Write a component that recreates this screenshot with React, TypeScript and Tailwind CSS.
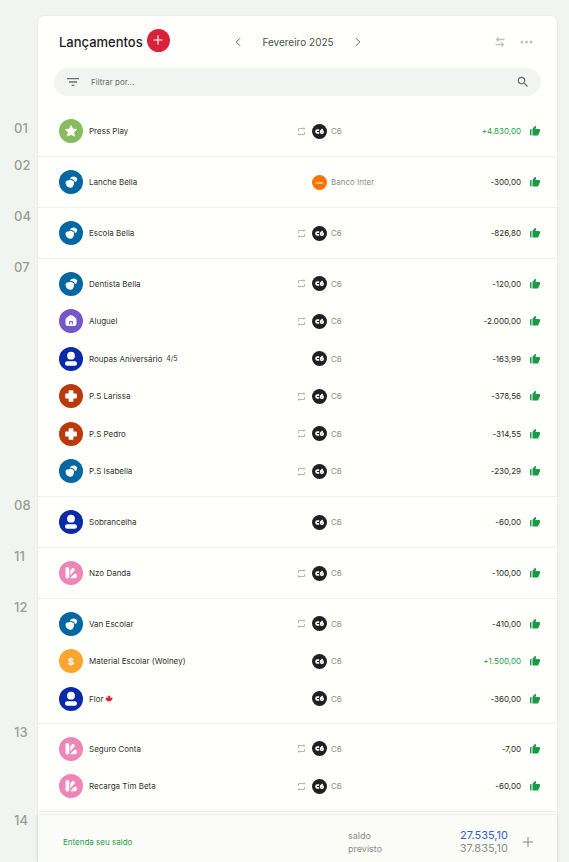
import React from "react";
import { MdFilterList, MdSearch } from "react-icons/md";
import { BiSolidLike } from "react-icons/bi";
import { FaCanadianMapleLeaf } from "react-icons/fa";
import { ChevronLeft, ChevronRight, Plus } from "lucide-react";

type Kind = "star" | "kids" | "home" | "person" | "health" | "swatch" | "money";

interface Entry {
  name: string;
  kind: Kind;
  amount: string;
  repeat?: boolean;
  bank?: "C6" | "Banco Inter";
  note?: string;
  leaf?: boolean;
}

interface Day {
  day: string;
  entries: Entry[];
}

const days: Day[] = [
  { day: "01", entries: [{ name: "Press Play", kind: "star", amount: "+4.830,00", repeat: true }] },
  { day: "02", entries: [{ name: "Lanche Bella", kind: "kids", amount: "-300,00", bank: "Banco Inter" }] },
  { day: "04", entries: [{ name: "Escola Bella", kind: "kids", amount: "-826,80", repeat: true }] },
  {
    day: "07",
    entries: [
      { name: "Dentista Bella", kind: "kids", amount: "-120,00", repeat: true },
      { name: "Aluguel", kind: "home", amount: "-2.000,00", repeat: true },
      { name: "Roupas Aniversário", kind: "person", amount: "-163,99", note: "4/5" },
      { name: "P.S Larissa", kind: "health", amount: "-378,56", repeat: true },
      { name: "P.S Pedro", kind: "health", amount: "-314,55", repeat: true },
      { name: "P.S Isabella", kind: "kids", amount: "-230,29", repeat: true },
    ],
  },
  { day: "08", entries: [{ name: "Sobrancelha", kind: "person", amount: "-60,00" }] },
  { day: "11", entries: [{ name: "Nzo Danda", kind: "swatch", amount: "-100,00", repeat: true }] },
  {
    day: "12",
    entries: [
      { name: "Van Escolar", kind: "kids", amount: "-410,00", repeat: true },
      { name: "Material Escolar (Wolney)", kind: "money", amount: "+1.500,00" },
      { name: "Flor", kind: "person", amount: "-360,00", leaf: true },
    ],
  },
  {
    day: "13",
    entries: [
      { name: "Seguro Conta", kind: "swatch", amount: "-7,00", repeat: true },
      { name: "Recarga Tim Beta", kind: "swatch", amount: "-60,00", repeat: true },
    ],
  },
  { day: "14", entries: [] },
];

const kindColor: Record<Kind, string> = {
  star: "bg-[#86bb5f]",
  kids: "bg-[#0467a1]",
  home: "bg-[#7656c8]",
  person: "bg-[#0a2aa8]",
  health: "bg-[#ba3a0c]",
  swatch: "bg-[#ee85b5]",
  money: "bg-[#fba62f]",
};

function Glyph({ kind }: { kind: Kind }) {
  switch (kind) {
    case "star":
      return (
        <path
          d="M12 6.6l1.700 3.500 3.800.5-2.800 2.700.7 3.800-3.400-1.800-3.400 1.800.7-3.800-2.800-2.700 3.800-.5z"
          strokeWidth="1"
          stroke="white"
          strokeLinejoin="round"
        />
      );
    case "kids":
      return (
        <>
          <path d="M11.2 9.200C11.200 7.400 12.600 6.400 14 6.800c.8-.6 2.200-.5 2.700.4 1.500.2 2 1.800 1.100 2.900.1 1.200-.8 2-1.900 2C15.800 10.200 13.500 8.700 11.200 9.200z" />
          <path d="M6.600 12.200c.2-1.300 1.500-2 2.700-1.700 1.100-1.100 3-1 3.900.1 1.500.1 2.300 1.500 1.800 2.800-.4 2.500-1.700 4.400-3.500 4.400-.6 0-1-.3-1.500-.6-1.700.1-3.700-2.600-3.400-5z" />
        </>
      );
    case "home":
      return (
        <path
          fillRule="evenodd"
          d="M10.500 6.600q1.500-1 3 0l2.900 2.100q1.100.8 1.100 2.100v3.900q0 2.300-2.300 2.300H8.800q-2.300 0-2.300-2.300v-3.900q0-1.300 1.100-2.100zM10.200 15.600v-3.700h3.600v3.700h-1v-2.600h-1.600v2.600z"
        />
      );
    case "person":
      return (
        <>
          <circle cx="12" cy="8.700" r="3.900" />
          <rect x="6" y="14.300" width="12" height="4.400" rx="2.200" />
        </>
      );
    case "health":
      return (
        <path
          d="M10.300 6.900h3.400v3.400h3.400v3.400h-3.400v3.400h-3.400v-3.400H6.900v-3.400h3.400z"
          strokeWidth="1.400"
          stroke="white"
          strokeLinejoin="round"
        />
      );
    case "swatch":
      return (
        <>
          <rect x="6.500" y="6.300" width="3.800" height="11.200" rx="1.400" />
          <path d="M11.300 9.500l1.800-2.200q.8-.8 1.700-.1l.7.600q.8.800.1 1.700l-4.300 5z" />
          <path d="M11 17.300l4.400-4.500h1q1.300 0 1.300 1.300v1.900q0 1.300-1.300 1.300z" />
        </>
      );
    case "money":
      return (
        <text x="12" y="15.500" textAnchor="middle" fontSize="9" fontWeight="800" fontFamily="Inter, sans-serif">
          $
        </text>
      );
  }
}

function RepeatIcon() {
  return (
    <svg viewBox="0 0 9 9" className="size-[9px]" fill="none" stroke="currentColor" aria-hidden="true">
      <path d="M1.500 4V1.500H7M7.500 5v2.500H2" />
      <path d="M6.500 0v3L8.500 1.500zM2.500 6v3L.5 7.500z" fill="currentColor" stroke="none" />
    </svg>
  );
}

function BankBadge({ bank }: { bank: "C6" | "Banco Inter" }) {
  if (bank === "Banco Inter") {
    return (
      <svg viewBox="0 0 15 15" className="size-[15px] shrink-0" aria-hidden="true">
        <circle cx="7.500" cy="7.500" r="7.500" fill="#ff7300" />
        <text x="7.500" y="8.700" textAnchor="middle" fontSize="3.500" fontWeight="700" fill="#ffe3cc" fontFamily="Inter, sans-serif">
          inter
        </text>
      </svg>
    );
  }
  return (
    <svg viewBox="0 0 15 15" className="size-[15px] shrink-0" fill="none" stroke="white" strokeWidth="1.600" aria-hidden="true">
      <circle cx="7.500" cy="7.500" r="7.500" fill="#202020" stroke="none" />
      <path d="M7.200 6.100H5.400q-1.400 0-1.400 1.400t1.400 1.400H7.200" />
      <path d="M10.600 5L8.700 7.300" />
      <circle cx="9.900" cy="8.100" r="1.300" />
    </svg>
  );
}

function EntryRow({ entry }: { entry: Entry }) {
  const bank = entry.bank ?? "C6";
  const income = entry.amount.startsWith("+");
  return (
    <li className="grid grid-cols-[minmax(0,1fr)_244px] items-center odd:h-[37px] even:h-[38px]">
      <div className="flex items-center gap-1.5">
        <span className={`size-6 shrink-0 rounded-full ${kindColor[entry.kind]}`}>
          <svg viewBox="0 0 24 24" className="size-6" fill="white" aria-hidden="true">
            <Glyph kind={entry.kind} />
          </svg>
        </span>
        <span className="flex items-center gap-1 whitespace-nowrap text-[#303331]">
          {entry.name}
          {entry.note && <small className="text-[7px]">{entry.note}</small>}
          {entry.leaf && <FaCanadianMapleLeaf className="-ml-0.5 size-2 text-[#e02030]" aria-hidden="true" />}
        </span>
      </div>
      <div className="flex items-center">
        <span className="w-[15px] shrink-0 text-[#b5b8b5]">{entry.repeat && <RepeatIcon />}</span>
        <BankBadge bank={bank} />
        <span className="ml-1 text-[#8c8f8c]">{bank}</span>
        <span className={`ml-auto ${income ? "text-[#21a04b]" : "text-[#282b29]"}`}>{entry.amount}</span>
        <button type="button" aria-label="Pago" className="ml-2 text-[#1a9a45]">
          <BiSolidLike className="size-3" />
        </button>
      </div>
    </li>
  );
}

export default function App() {
  return (
    <div className="h-screen overflow-hidden bg-[#f1f4f0] pt-4 pr-3 pl-[38px] font-['Inter',sans-serif] text-[8px] leading-3">
      <main className="flex h-full flex-col rounded-t-md bg-[#fffffb] shadow-[0_0_2px_rgba(0,0,0,0.1)]">
        <header className="flex h-[52px] shrink-0 items-center pr-6 pl-[21px]">
          <h1 className="text-[13px] leading-4 font-medium text-[#1e211f]">Lançamentos</h1>
          <button
            type="button"
            aria-label="Adicionar"
            className="mr-auto mb-1 ml-1 flex size-[23px] items-center justify-center rounded-full bg-[#d82239] text-white"
          >
            <Plus className="size-3.5" />
          </button>
          <nav className="flex items-center text-[#4c4f4d]">
            <button type="button" aria-label="Mês anterior">
              <ChevronLeft className="size-3.5" strokeWidth={1.5} />
            </button>
            <span className="w-[106px] text-center text-[10px] leading-4">Fevereiro 2025</span>
            <button type="button" aria-label="Próximo mês">
              <ChevronRight className="size-3.5" strokeWidth={1.5} />
            </button>
          </nav>
          <div className="ml-[130px] flex items-center gap-[15px] text-[#bfc1be]">
            <button type="button" aria-label="Transferir">
              <svg viewBox="0 0 10 10" className="size-2.5" fill="none" stroke="currentColor" strokeWidth="1.300" aria-hidden="true">
                <path d="M9.500 2.500H1.500M3.500.5l-2 2 2 2M.5 7.500h8M6.500 5.500l2 2-2 2" />
              </svg>
            </button>
            <button type="button" aria-label="Mais opções">
              <svg viewBox="0 0 13 4" className="h-1 w-[13px]" fill="currentColor" aria-hidden="true">
                <circle cx="2" cy="2" r="1.500" />
                <circle cx="6.500" cy="2" r="1.500" />
                <circle cx="11" cy="2" r="1.500" />
              </svg>
            </button>
          </div>
        </header>

        <div className="mx-4 mb-2.5 flex h-7 shrink-0 items-center rounded-full bg-[#f1f4f0] px-[11px] text-[#6c6f6d]">
          <MdFilterList className="size-4" />
          <input
            type="text"
            aria-label="Filtrar lançamentos"
            placeholder="Filtrar por..."
            className="ml-2.5 min-w-0 flex-1 bg-transparent outline-none placeholder:text-[#6c6f6d]"
          />
          <button type="button" aria-label="Buscar">
            <MdSearch className="size-3.5" />
          </button>
        </div>

        <div className="-ml-[38px] min-h-0 flex-1">
          {days.map(({ day, entries }, index) => (
            <section key={day} className="flex min-h-[51px]">
              <h2
                className={`w-[38px] shrink-0 pl-3.5 text-[13px] leading-4 font-medium text-[#9a9d9a] ${
                  index === 0 ? "pt-3.5" : ""
                }`}
              >
                {day}
              </h2>
              {entries.length > 0 && (
                <ul className="flex flex-1 flex-col justify-center border-b border-[#eff0ed] py-1.5 pr-4 pl-[21px]">
                  {entries.map((entry) => (
                    <EntryRow key={entry.name} entry={entry} />
                  ))}
                </ul>
              )}
            </section>
          ))}
        </div>

        <footer className="z-10 flex h-[47px] shrink-0 items-center bg-[#fbfbf7] pt-1.5 pr-[21px] pl-[25px] shadow-[0_0_3px_rgba(0,0,0,0.15)]">
          <a href="#saldo" className="text-[#21a04b]">
            Entenda seu saldo
          </a>
          <dl className="ml-auto grid w-40 grid-cols-[1fr_auto] items-center text-[9px] leading-[13px] text-[#8c8f8c]">
            <dt>saldo</dt>
            <dd className="text-right text-[11px] text-[#3560c8]">27.535,10</dd>
            <dt>previsto</dt>
            <dd className="text-right text-[11px]">37.835,10</dd>
          </dl>
          <button type="button" aria-label="Expandir saldo" className="ml-3 text-[#858885]">
            <Plus className="size-4" strokeWidth={1.5} />
          </button>
        </footer>
      </main>
    </div>
  );
}
